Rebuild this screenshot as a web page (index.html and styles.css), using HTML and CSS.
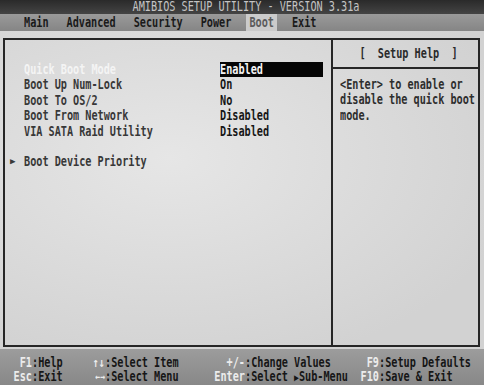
FILE: index.html
```html
<!DOCTYPE html>
<html lang="en">
<head>
  <meta charset="UTF-8">
  <title>AMIBIOS Setup Utility</title>
  <link rel="stylesheet" href="styles.css">
</head>
<body>
  <div class="screen">
    <div class="title"><span class="tall">AMIBIOS SETUP UTILITY - VERSION 3.31a</span></div>
    <div class="menu">
      <div class="menu-item"><span class="tall">Main</span></div>
      <div class="menu-item"><span class="tall">Advanced</span></div>
      <div class="menu-item"><span class="tall">Security</span></div>
      <div class="menu-item"><span class="tall">Power</span></div>
      <div class="menu-item active"><span class="tall">Boot</span></div>
      <div class="menu-item"><span class="tall">Exit</span></div>
    </div>
    <div class="main">
      <div class="box">
        <div class="options">
          <div class="row current">
            <span></span>
            <span class="label tall">Quick Boot Mode</span>
            <span class="value"><span class="tall">Enabled</span></span>
          </div>
          <div class="row">
            <span></span>
            <span class="label tall">Boot Up Num-Lock</span>
            <span class="value"><span class="tall">On</span></span>
          </div>
          <div class="row">
            <span></span>
            <span class="label tall">Boot To OS/2</span>
            <span class="value"><span class="tall">No</span></span>
          </div>
          <div class="row">
            <span></span>
            <span class="label tall">Boot From Network</span>
            <span class="value"><span class="tall">Disabled</span></span>
          </div>
          <div class="row">
            <span></span>
            <span class="label tall">VIA SATA Raid Utility</span>
            <span class="value"><span class="tall">Disabled</span></span>
          </div>
          <div class="row submenu">
            <span class="marker">&#9654;</span>
            <span class="label tall">Boot Device Priority</span>
            <span></span>
          </div>
        </div>
        <div class="help">
          <div class="help-head"><span class="tall">[  Setup Help  ]</span></div>
          <div class="help-body">
            <div class="line"><span class="tall">&lt;Enter&gt; to enable or</span></div>
            <div class="line"><span class="tall">disable the quick boot</span></div>
            <div class="line"><span class="tall">mode.</span></div>
          </div>
        </div>
      </div>
    </div>
    <div class="footer">
      <span class="key tall">F1</span><span class="desc tall">:Help</span>
      <span class="key tall">&uarr;&darr;</span><span class="desc tall">:Select Item</span>
      <span class="key tall">+/-</span><span class="desc tall">:Change Values</span>
      <span class="key tall">F9</span><span class="desc tall">:Setup Defaults</span>
      <span class="key tall">Esc</span><span class="desc tall">:Exit</span>
      <span class="key tall arrows">&larr;&rarr;</span><span class="desc tall">:Select Menu</span>
      <span class="key tall">Enter</span><span class="desc tall">:Select <small>&#9654;</small>Sub-Menu</span>
      <span class="key tall">F10</span><span class="desc tall">:Save &amp; Exit</span>
    </div>
  </div>
</body>
</html>
```
FILE: styles.css
```css
body {
  margin: 0;
  background: #8a8a8a;
  font-family: "DejaVu Sans Mono", "Liberation Mono", monospace;
  font-weight: bold;
  font-size: 10.2px;
}
.screen {
  width: 484px;
  height: 385px;
  overflow: hidden;
}
.tall {
  display: inline-block;
  transform: scaleY(1.3);
  white-space: pre;
}

/* title + menu */
.title {
  height: 14px;
  line-height: 14px;
  background: linear-gradient(#2a2a2a, #444);
  color: #c4c4c4;
  font-weight: normal;
  text-align: center;
  padding-left: 8px;
}
.menu {
  height: 17px;
  line-height: 17px;
  background: linear-gradient(#9a9a9a, #858585);
  display: flex;
  gap: 12px;
  padding-left: 21px;
}
.menu-item {
  padding: 0 3px;
  color: #1a1a1a;
}
.menu-item.active {
  background: #cbcbcb;
  color: #5c5c5c;
}

/* main panel */
.main {
  height: 318px;
  box-sizing: border-box;
  padding: 7px 4px 2px 3px;
  background: radial-gradient(ellipse at 35% 40%, #e6e6e6, #d2d2d2 80%);
}
.box {
  height: 100%;
  box-sizing: border-box;
  border: 2px solid #262626;
  display: grid;
  grid-template-columns: 326px 1fr;
}
.options {
  padding: 22px 0 0 4px;
}
.row {
  display: grid;
  grid-template-columns: 15px 196px 103px;
  height: 15.4px;
  line-height: 15.4px;
}
.label {
  color: #383838;
}
.value {
  color: #161616;
}
.row.current .label {
  color: #f4f4f4;
}
.row.current .value {
  background: #050505;
  color: #f4f4f4;
}
.row.submenu {
  margin-top: 15.4px;
}
.marker {
  color: #3a3a3a;
  font-size: 9px;
  padding-left: 1px;
}

/* help panel */
.help {
  border-left: 2px solid #262626;
}
.help-head {
  height: 27px;
  line-height: 27px;
  border-bottom: 2px solid #262626;
  text-align: center;
  padding-left: 6px;
  color: #2a2a2a;
}
.help-body {
  padding: 8px 0 0 7px;
  color: #2e2e2e;
}
.line {
  height: 15.4px;
  line-height: 15.4px;
}

/* footer */
.footer {
  height: 36px;
  box-sizing: border-box;
  padding-top: 7px;
  background: linear-gradient(#9c9c9c, #888);
  display: grid;
  grid-template-columns: 32px 53px 20px 95px 45px 95px 39px auto;
  grid-auto-rows: 14px;
  line-height: 14px;
}
.key {
  text-align: right;
  color: #ececec;
}
.key.arrows {
  font-size: 8px;
}
.desc {
  color: #161616;
}
.desc small {
  font-size: 8px;
}
```
